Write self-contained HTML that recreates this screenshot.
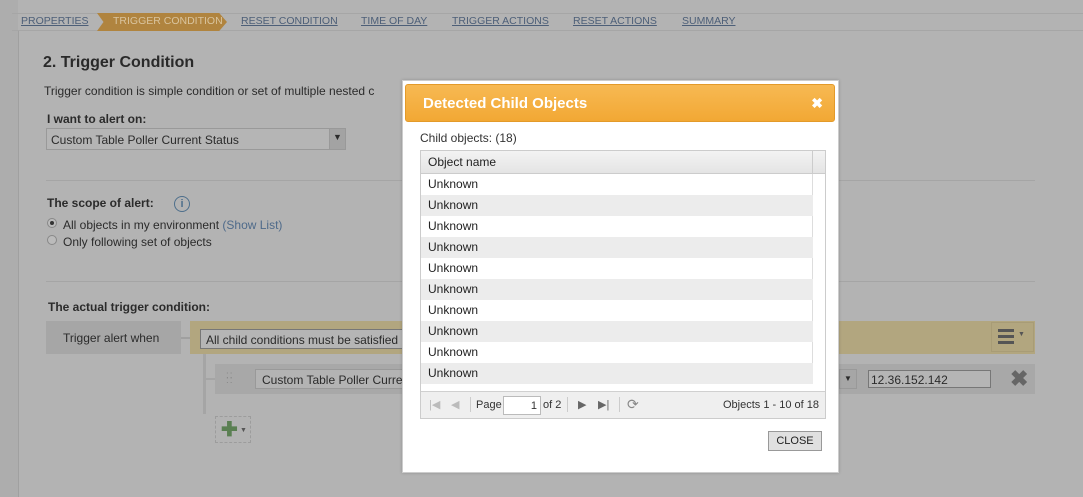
<!DOCTYPE html>
<html><head><style>
*{margin:0;padding:0;box-sizing:border-box}
body{width:1083px;height:497px;background:#b3b3b3;font-family:"Liberation Sans",Arial,sans-serif;font-size:12px;color:#2b2b2b;position:relative;overflow:hidden}
.a{position:absolute}
.bc{top:13px;left:12px;height:18px;width:1071px;border-top:1px solid #a6a6a6;border-bottom:1px solid #a6a6a6;}
.row{left:421px;width:392px;height:21px;padding:3px 0 0 7px;font-size:12px;color:#222}
.b{position:absolute;top:1px;text-decoration:underline;color:#4d5f78;white-space:nowrap;font-size:10.5px}
</style></head><body>
<div class="a" style="left:0;top:0;width:18px;height:497px;background:#adadad"></div>
<div class="a" style="left:18px;top:30px;width:1px;height:467px;background:#a0a0a0"></div>
<div class="a bc"></div>
<div class="a" style="left:97px;top:13px;width:130px;height:18px;background:#b0843f;clip-path:polygon(0 0,94% 0,100% 50%,94% 100%,0 100%,5% 50%)"></div>
<div class="a" style="left:0;top:14px">
<span class="b" style="left:21px">PROPERTIES</span>
<span class="b" style="left:113px;color:#d9c49e;text-decoration:none">TRIGGER CONDITION</span>
<span class="b" style="left:241px">RESET CONDITION</span>
<span class="b" style="left:361px">TIME OF DAY</span>
<span class="b" style="left:452px">TRIGGER ACTIONS</span>
<span class="b" style="left:573px">RESET ACTIONS</span>
<span class="b" style="left:682px">SUMMARY</span>
</div>
<div class="a" style="left:43px;top:54px;font-size:16px;font-weight:bold;color:#2a2a2a">2. Trigger Condition</div>
<div class="a" style="left:44px;top:84px;white-space:nowrap">Trigger condition is simple condition or set of multiple nested c</div>
<div class="a" style="left:47px;top:112px;font-weight:bold">I want to alert on:</div>
<div class="a" style="left:46px;top:128px;width:300px;height:22px;border:1px solid #999;background:#b5b5b5;padding:4px 0 0 4px">Custom Table Poller Current Status</div>
<div class="a" style="left:329px;top:129px;width:16px;height:20px;background:#a3a3a3;border-left:1px solid #999;text-align:center;font-size:9px;padding-top:3px">&#9660;</div>
<div class="a" style="left:46px;top:180px;width:989px;height:1px;background:#a5a5a5"></div>
<div class="a" style="left:47px;top:196px;font-weight:bold">The scope of alert:</div>
<div class="a" style="left:174px;top:196px;width:16px;height:16px;border:1px solid #4e6f8c;border-radius:50%;color:#4e6f8c;font-size:11px;text-align:center;line-height:14px;font-weight:bold">i</div>
<div class="a" style="left:47px;top:218px;width:10px;height:10px;border:1px solid #888;border-radius:50%;background:#bbb"><div style="margin:2px;width:4px;height:4px;border-radius:50%;background:#333"></div></div>
<div class="a" style="left:63px;top:218px">All objects in my environment <span style="color:#4e6a8a">(Show List)</span></div>
<div class="a" style="left:47px;top:235px;width:10px;height:10px;border:1px solid #888;border-radius:50%;background:#bbb"></div>
<div class="a" style="left:63px;top:235px">Only following set of objects</div>
<div class="a" style="left:46px;top:281px;width:989px;height:1px;background:#a5a5a5"></div>
<div class="a" style="left:48px;top:300px;font-weight:bold">The actual trigger condition:</div>
<div class="a" style="left:46px;top:321px;width:135px;height:33px;background:#a6a6a6;padding:10px 0 0 17px">Trigger alert when</div>
<div class="a" style="left:181px;top:337px;width:10px;height:2px;background:#a0a0a0"></div>
<div class="a" style="left:190px;top:321px;width:845px;height:33px;background:#b2a67f"></div>
<div class="a" style="left:200px;top:329px;width:210px;height:20px;border:1px solid #777;border-right:none;background:#b5b5b5;padding:3px 0 0 5px;white-space:nowrap;overflow:hidden">All child conditions must be satisfied</div>
<div class="a" style="left:991px;top:322px;width:43px;height:30px;border:1px solid #a89c76"></div>
<div class="a" style="left:998px;top:329px;width:16px;height:3px;background:#555;box-shadow:0 6px 0 #555,0 12px 0 #555"></div>
<div class="a" style="left:1018px;top:331px;font-size:7px;color:#555">&#9660;</div>
<div class="a" style="left:203px;top:354px;width:3px;height:60px;background:#a5a5a5"></div>
<div class="a" style="left:203px;top:378px;width:12px;height:2px;background:#a5a5a5"></div>
<div class="a" style="left:215px;top:364px;width:820px;height:30px;background:#a8a8a8"></div>
<div class="a" style="left:226px;top:373px;font-size:10px;color:#888;letter-spacing:1px;line-height:5px">::<br>::</div>
<div class="a" style="left:255px;top:369px;width:190px;height:20px;border:1px solid #999;background:#b3b3b3;padding:3px 0 0 6px;white-space:nowrap;overflow:hidden">Custom Table Poller Current Status</div>
<div class="a" style="left:839px;top:369px;width:18px;height:20px;border:1px solid #999;background:#a6a6a6;font-size:8px;text-align:center;padding-top:4px">&#9660;</div>
<div class="a" style="left:868px;top:370px;width:123px;height:18px;border:1px solid #777;background:#b5b5b5;padding:2px 0 0 2px">12.36.152.142</div>
<div class="a" style="left:1010px;top:366px;font-size:22px;color:#666;font-weight:bold">&#10006;</div>
<div class="a" style="left:215px;top:416px;width:36px;height:27px;border:1px dashed #9c9c9c"></div>
<div class="a" style="left:221px;top:420px;font-size:20px;font-weight:bold;color:#5a7f52;line-height:20px">&#10010;</div>
<div class="a" style="left:240px;top:427px;font-size:7px;color:#555">&#9660;</div>

<div class="a" style="left:402px;top:80px;width:437px;height:393px;background:#fff;border:1px solid #ccc;box-shadow:0 0 3px rgba(0,0,0,.2)"></div>
<div class="a" style="left:405px;top:84px;width:430px;height:38px;background:linear-gradient(#f7b953,#f2a834);border:1px solid #e39a2a;border-radius:3px;color:#fff;font-weight:bold;font-size:15px;padding:10px 0 0 17px">Detected Child Objects<span style="position:absolute;right:11px;top:10px;font-size:14px">&#10006;</span></div>
<div class="a" style="left:420px;top:131px;color:#333">Child objects: (18)</div>
<div class="a" style="left:420px;top:150px;width:406px;height:269px;border:1px solid #ccc;background:#fff"></div>
<div class="a" style="left:421px;top:151px;width:404px;height:23px;background:linear-gradient(#f3f3f3,#e4e4e4);border-bottom:1px solid #ccc;padding:4px 0 0 7px;color:#222">Object name</div>
<div class="a" style="left:812px;top:151px;width:1px;height:23px;background:#ccc"></div>
<div class="a" style="left:812px;top:174px;width:1px;height:210px;background:#ddd"></div>
<div class="a row" style="top:174px">Unknown</div>
<div class="a row" style="top:195px;background:#ececec">Unknown</div>
<div class="a row" style="top:216px">Unknown</div>
<div class="a row" style="top:237px;background:#ececec">Unknown</div>
<div class="a row" style="top:258px">Unknown</div>
<div class="a row" style="top:279px;background:#ececec">Unknown</div>
<div class="a row" style="top:300px">Unknown</div>
<div class="a row" style="top:321px;background:#ececec">Unknown</div>
<div class="a row" style="top:342px">Unknown</div>
<div class="a row" style="top:363px;background:#ececec">Unknown</div>
<div class="a" style="left:421px;top:391px;width:404px;height:27px;background:#efefef;border-top:1px solid #d0d0d0;font-size:11px;color:#333">
<span class="a" style="left:8px;top:6px;color:#bbb">|&#9664;</span>
<span class="a" style="left:30px;top:6px;color:#bbb">&#9664;</span>
<span class="a" style="left:49px;top:5px;width:1px;height:15px;background:#ccc"></span>
<span class="a" style="left:55px;top:7px">Page</span>
<span class="a" style="left:82px;top:4px;width:38px;height:19px;border:1px solid #bbb;background:#fff;text-align:right;padding:3px 3px 0 0">1</span>
<span class="a" style="left:122px;top:7px">of 2</span>
<span class="a" style="left:146px;top:5px;width:1px;height:15px;background:#ccc"></span>
<span class="a" style="left:157px;top:6px;color:#666">&#9654;</span>
<span class="a" style="left:177px;top:6px;color:#666">&#9654;|</span>
<span class="a" style="left:198px;top:5px;width:1px;height:15px;background:#ccc"></span>
<span class="a" style="left:206px;top:4px;color:#888;font-size:14px">&#10227;</span>
<span class="a" style="left:302px;top:7px">Objects 1 - 10 of 18</span>
</div>
<div class="a" style="left:768px;top:431px;width:54px;height:20px;border:1px solid #999;background:#e0e0e0;font-size:11px;text-align:center;padding-top:3px;color:#222">CLOSE</div>
</body></html>
